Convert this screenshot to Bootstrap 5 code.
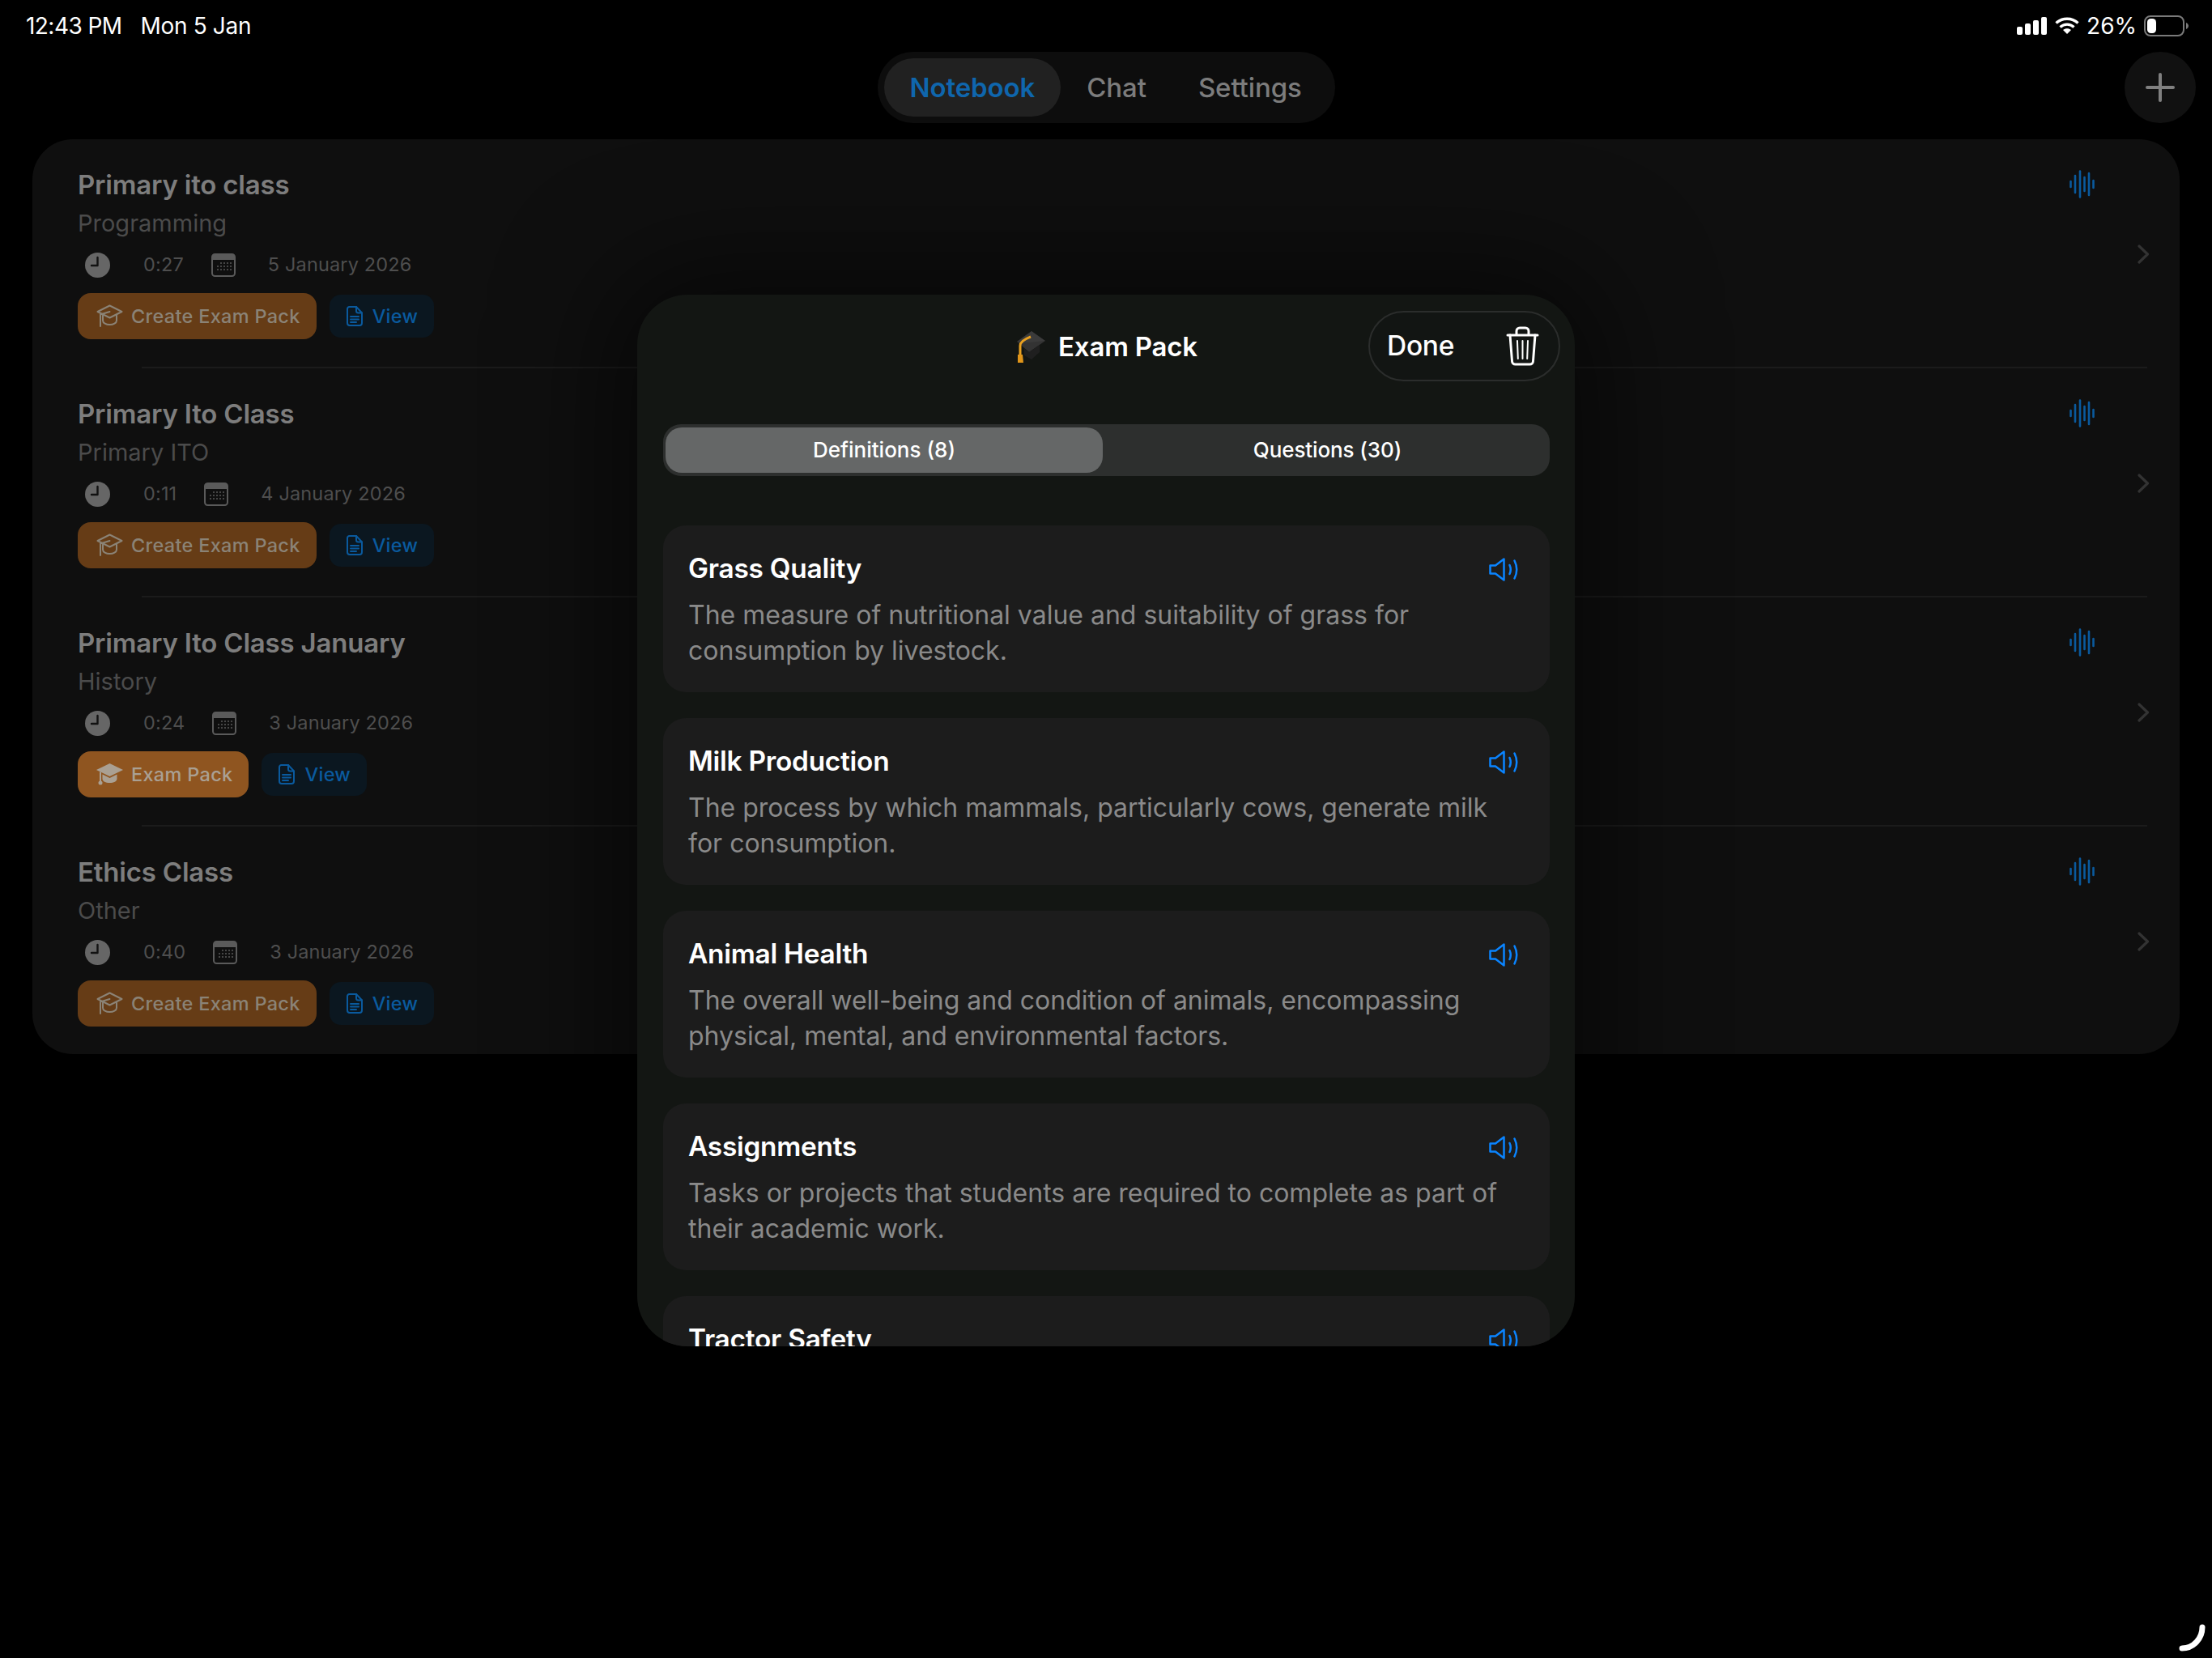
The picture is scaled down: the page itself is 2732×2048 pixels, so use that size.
<!DOCTYPE html>
<html lang="en">
<head>
<meta charset="utf-8">
<title>Notebook</title>
<link href="https://cdn.jsdelivr.net/npm/bootstrap@5.3.0/dist/css/bootstrap.min.css" rel="stylesheet">
<style>
html,body{background:#000;}
body{width:2732px;height:2048px;position:relative;overflow:hidden;font-family:Inter,"Liberation Sans",sans-serif;color:#fff;}
svg{display:block;flex:none;}
.statusbar{height:64px;padding:0 28px 0 32px;font-size:28px;line-height:64px;font-family:Inter,sans-serif;}
.statusbar .time{letter-spacing:-.55px;margin-right:23px;}
.statusbar .date{letter-spacing:-.35px;}
.status-right{gap:9px;}
.navrow{height:88px;margin-bottom:20px;position:relative;}
.tabs{width:565px;height:88px;border-radius:44px;background:#0d0d0d;padding:8px;gap:0;}
.tabs .nav-link{height:72px;border-radius:36px;font-size:33px;line-height:72px;padding:0 32px;color:#7c7c7c;font-weight:500;letter-spacing:-.1px;}
.tabs .nav-link.active{background:#212121;color:#0f66ad;font-weight:600;}
.plus{position:absolute;right:20px;top:0;width:88px;height:88px;border-radius:50%;background:#111;border:0;padding:0;}
.panel{margin:0 40px;height:1130px;background:#0f0f0f;border-radius:50px;overflow:hidden;}
.note{height:281px;padding:34px 37px 0 56px;background:transparent;border:0;border-radius:0;}
.note-title{font-size:33px;line-height:44px;font-weight:600;color:#7d7d7d;letter-spacing:-.2px;}
.note-sub{font-size:29px;line-height:40px;margin-top:6px;color:#4b4b4b;}
.meta{height:36px;margin-top:13px;padding-left:9px;font-size:23.5px;line-height:36px;color:#4e4e4e;letter-spacing:.15px;}
.meta .dur{margin:0 34px 0 41px;}
.meta .day{margin-left:40px;}
.actions{margin-top:17px;gap:16px;}
.btn-pack{height:57px;border-radius:16px;border:0;padding:0 20px 0 23px;gap:10px;background:#663c16;color:#8b8376;font-size:23.5px;font-weight:500;letter-spacing:.3px;}
.btn-pack.done-pack{background:#8f5520;color:#aaa093;}
.btn-view{height:53px;border-radius:14px;border:0;padding:0 20px 0 21px;gap:12px;background:#0b1720;color:#0a5a9e;font-size:23.5px;font-weight:500;letter-spacing:.3px;}
.wave{margin-right:53px;margin-top:4px;}
.chev{margin-top:96px;}
.sep{height:2px;margin:0 40px 0 135px;background:#1b1b1b;}
.modal-sheet{position:absolute;left:787px;top:364px;width:1158px;height:1299px;border-radius:62px;background:#131613;overflow:hidden;box-shadow:0 0 140px 30px rgba(0,0,0,.55);}
.sheet-head{display:grid;grid-template-columns:1fr auto 1fr;align-items:center;padding:20px 18px 0;}
.sheet-title{gap:14px;font-size:33px;font-weight:600;line-height:44px;letter-spacing:-.2px;}
.done-pill{justify-self:end;width:237px;height:87px;border:2px solid #2b2d2c;border-radius:44px;padding:0 24px 0 21px;background:#121513;}
.done-pill span{font-size:33.5px;font-weight:500;letter-spacing:-.3px;color:#fff;}
.seg{margin:53px 31px 0 32px;height:64px;padding:4px 3px;background:#2d2f2e;border-radius:22px;}
.seg .btn{flex:1 1 0;height:56px;border:0;border-radius:20px;padding:0 0 0 6px;font-size:26px;font-weight:500;color:#fff;line-height:56px;letter-spacing:-.1px;}
.seg .btn.active{flex:0 0 540px;padding:0;background:#656767;color:#fff;letter-spacing:0;}
.defs{margin:61px 31px 0 32px;gap:32px;}
.def{height:206px;flex:none;border:0;border-radius:28px;background:#1c1c1c;padding:31px 38px 30px 31px;}
.def h5{font-size:33.4px;line-height:44px;font-weight:600;margin:0;color:#fff;letter-spacing:-.25px;}
.def .speak{margin-top:2px;}
.def p{font-size:32px;line-height:44px;margin:14px 0 0;color:#8a8a8a;letter-spacing:0;}
.grab{position:absolute;right:8px;bottom:7px;}
</style>
</head>
<body>
<svg width="0" height="0" style="position:absolute">
<defs>
<symbol id="i-clock" viewBox="0 0 31 31"><circle cx="15.5" cy="15.5" r="15.5" fill="#666"/><path d="M15.5 6v10H8" fill="none" stroke="#121212" stroke-width="2.4" stroke-linecap="round" stroke-linejoin="round"/></symbol>
<symbol id="i-cal" viewBox="0 0 30 29"><rect x="1" y="1" width="28" height="27" rx="3.5" fill="none" stroke="#5a5a5a" stroke-width="2"/><path d="M1 8V4.5A3.5 3.5 0 0 1 4.5 1h21A3.5 3.5 0 0 1 29 4.5V8z" fill="#5a5a5a"/><g fill="#5a5a5a"><circle cx="12" cy="12" r="1"/><circle cx="16" cy="12" r="1"/><circle cx="20" cy="12" r="1"/><circle cx="24" cy="12" r="1"/><circle cx="8" cy="16" r="1"/><circle cx="12" cy="16" r="1"/><circle cx="16" cy="16" r="1"/><circle cx="20" cy="16" r="1"/><circle cx="24" cy="16" r="1"/><circle cx="8" cy="20" r="1"/><circle cx="12" cy="20" r="1"/><circle cx="16" cy="20" r="1"/><circle cx="20" cy="20" r="1"/><circle cx="24" cy="20" r="1"/></g></symbol>
<symbol id="i-cap" viewBox="0 0 33 29"><g fill="none" stroke="currentColor" stroke-width="2" stroke-linejoin="round" stroke-linecap="round"><path d="M16.5 1.5 31.5 9 16.5 16.5 1.5 9z"/><path d="M8 13.5V20c0 3 4 5 8.5 5S25 23 25 20v-6.5"/><path d="M16.5 9 5 12.5V27"/></g></symbol>
<symbol id="i-capf" viewBox="0 0 33 29"><path d="M16.5 1 33 9 16.5 17 0 9z" fill="currentColor"/><path d="M7.5 14.5 16.5 19l9-4.500V20c0 3-4 5-9 5s-9-2-9-5z" fill="currentColor"/><path d="M5 11.5V24" stroke="currentColor" stroke-width="2" fill="none"/><circle cx="5" cy="25" r="2.5" fill="currentColor"/></symbol>
<symbol id="i-doc" viewBox="0 0 20 25"><g fill="none" stroke="currentColor" stroke-width="2" stroke-linejoin="round" stroke-linecap="round"><path d="M3.5 1H12l7 7.5V21a3 3 0 0 1-3 3H4a3 3 0 0 1-3-3V3.5A2.5 2.5 0 0 1 3.5 1z"/><path d="M12 1v5a2.5 2.5 0 0 0 2.5 2.5H19"/><path d="M5 13h10M5 16.5h10M5 20h7"/></g></symbol>
<symbol id="i-wave" viewBox="0 0 31 35"><g stroke="#0a5a9e" stroke-width="2.6" stroke-linecap="round"><path d="M1.5 14v7M7 7v21M13 1.5v32M18.5 9v17M24 4v27M29.5 13v9"/></g></symbol>
<symbol id="i-chev" viewBox="0 0 15 24"><path d="M2 2l10.5 10L2 22" fill="none" stroke="#333" stroke-width="3.2" stroke-linecap="round" stroke-linejoin="round"/></symbol>
<symbol id="i-speak" viewBox="0 0 37 29"><g fill="none" stroke="#0a84ff" stroke-width="2.5" stroke-linecap="round" stroke-linejoin="round"><path d="M1.5 9.5H8L18.5 1.5v26L8 19.5H1.5z"/><path d="M25.5 9c1.6 3.5 1.6 7.5 0 11"/><path d="M31.5 3.5c3.5 7 3.5 15 0 22"/></g></symbol>
</defs>
</svg>

<header class="statusbar d-flex justify-content-between">
  <div><span class="time">12:43 PM</span><span class="date">Mon 5 Jan</span></div>
  <div class="status-right d-flex align-items-center">
    <svg width="38" height="24" viewBox="0 0 38 24"><g fill="#fff"><rect x="0" y="13" width="7" height="10" rx="2"/><rect x="10" y="9" width="7" height="14" rx="2"/><rect x="20" y="5" width="7" height="18" rx="2"/><rect x="30" y="1" width="7" height="22" rx="2"/></g></svg>
    <svg width="30" height="24" viewBox="0 0 30 24"><g fill="none" stroke="#fff" stroke-width="3.4"><path d="M1.5 8.5C9 1.5 21 1.5 28.5 8.5"/><path d="M6.5 13.5C11.5 9 18.5 9 23.5 13.5"/></g><path d="M15 22l-5-5c3-2.5 7-2.5 10 0z" fill="#fff"/></svg>
    <span class="pct">26%</span>
    <svg width="56" height="26" viewBox="0 0 56 26"><rect x="1" y="1" width="48" height="24" rx="7" fill="none" stroke="#7a7a7a" stroke-width="2"/><rect x="4" y="4" width="11" height="18" rx="4.5" fill="#fff"/><path d="M52 9c2 1 3 2.5 3 4s-1 3-3 4z" fill="#7a7a7a"/></svg>
  </div>
</header>

<div class="navrow d-flex justify-content-center">
  <ul class="nav tabs flex-nowrap">
    <li class="nav-item"><a class="nav-link active" href="#">Notebook</a></li>
    <li class="nav-item"><a class="nav-link" href="#">Chat</a></li>
    <li class="nav-item"><a class="nav-link" href="#">Settings</a></li>
  </ul>
  <button class="plus btn d-flex align-items-center justify-content-center" aria-label="Add"><svg width="36" height="36" viewBox="0 0 36 36"><path d="M18 2v32M2 18h32" stroke="#808080" stroke-width="4" stroke-linecap="round"/></svg></button>
</div>

<main class="panel list-group">
  <div class="note list-group-item d-flex">
    <div class="flex-grow-1">
      <div class="note-title">Primary ito class</div>
      <div class="note-sub">Programming</div>
      <div class="meta d-flex align-items-center"><svg width="31" height="31"><use href="#i-clock"/></svg><span class="dur">0:27</span><svg width="30" height="29"><use href="#i-cal"/></svg><span class="day">5 January 2026</span></div>
      <div class="actions d-flex align-items-center">
        <button class="btn btn-pack d-flex align-items-center"><svg width="33" height="29"><use href="#i-cap"/></svg>Create Exam Pack</button>
        <button class="btn btn-view d-flex align-items-center"><svg width="20" height="25"><use href="#i-doc"/></svg>View</button>
      </div>
    </div>
    <svg class="wave" width="31" height="35"><use href="#i-wave"/></svg>
    <svg class="chev" width="15" height="24"><use href="#i-chev"/></svg>
  </div>
  <div class="sep"></div>
  <div class="note list-group-item d-flex">
    <div class="flex-grow-1">
      <div class="note-title">Primary Ito Class</div>
      <div class="note-sub">Primary ITO</div>
      <div class="meta d-flex align-items-center"><svg width="31" height="31"><use href="#i-clock"/></svg><span class="dur">0:11</span><svg width="30" height="29"><use href="#i-cal"/></svg><span class="day">4 January 2026</span></div>
      <div class="actions d-flex align-items-center">
        <button class="btn btn-pack d-flex align-items-center"><svg width="33" height="29"><use href="#i-cap"/></svg>Create Exam Pack</button>
        <button class="btn btn-view d-flex align-items-center"><svg width="20" height="25"><use href="#i-doc"/></svg>View</button>
      </div>
    </div>
    <svg class="wave" width="31" height="35"><use href="#i-wave"/></svg>
    <svg class="chev" width="15" height="24"><use href="#i-chev"/></svg>
  </div>
  <div class="sep"></div>
  <div class="note list-group-item d-flex">
    <div class="flex-grow-1">
      <div class="note-title">Primary Ito Class January</div>
      <div class="note-sub">History</div>
      <div class="meta d-flex align-items-center"><svg width="31" height="31"><use href="#i-clock"/></svg><span class="dur">0:24</span><svg width="30" height="29"><use href="#i-cal"/></svg><span class="day">3 January 2026</span></div>
      <div class="actions d-flex align-items-center">
        <button class="btn btn-pack done-pack d-flex align-items-center"><svg width="33" height="29"><use href="#i-capf"/></svg>Exam Pack</button>
        <button class="btn btn-view d-flex align-items-center"><svg width="20" height="25"><use href="#i-doc"/></svg>View</button>
      </div>
    </div>
    <svg class="wave" width="31" height="35"><use href="#i-wave"/></svg>
    <svg class="chev" width="15" height="24"><use href="#i-chev"/></svg>
  </div>
  <div class="sep"></div>
  <div class="note list-group-item d-flex">
    <div class="flex-grow-1">
      <div class="note-title">Ethics Class</div>
      <div class="note-sub">Other</div>
      <div class="meta d-flex align-items-center"><svg width="31" height="31"><use href="#i-clock"/></svg><span class="dur">0:40</span><svg width="30" height="29"><use href="#i-cal"/></svg><span class="day">3 January 2026</span></div>
      <div class="actions d-flex align-items-center">
        <button class="btn btn-pack d-flex align-items-center"><svg width="33" height="29"><use href="#i-cap"/></svg>Create Exam Pack</button>
        <button class="btn btn-view d-flex align-items-center"><svg width="20" height="25"><use href="#i-doc"/></svg>View</button>
      </div>
    </div>
    <svg class="wave" width="31" height="35"><use href="#i-wave"/></svg>
    <svg class="chev" width="15" height="24"><use href="#i-chev"/></svg>
  </div>
</main>

<section class="modal-sheet">
  <div class="sheet-head">
    <div></div>
    <div class="sheet-title d-flex align-items-center">
      <svg width="40" height="42" viewBox="0 0 40 42"><path d="M21 2 38 14 18 28 3 15z" fill="#333"/><path d="M21 2 38 14 18 16 3 15z" fill="#444" opacity=".5"/><path d="M12 24v8l9 5 10-9v-9l-13 9z" fill="#1f1f1f"/><path d="M20 9C12 12 7 15 7 20v11" fill="none" stroke="#e8a020" stroke-width="3"/><path d="M4 31h6l1 10H4z" fill="#e0951a"/></svg>
      <span>Exam Pack</span>
    </div>
    <div class="done-pill d-flex align-items-center justify-content-between">
      <span>Done</span>
      <svg width="41" height="49" viewBox="0 0 41 49" aria-label="Delete"><g fill="none" stroke="#fff" stroke-width="3" stroke-linecap="round" stroke-linejoin="round"><path d="M2 11h37"/><path d="M13 10V6a4 4 0 0 1 4-4h7a4 4 0 0 1 4 4v4"/><path d="M5 11l2.5 32a4 4 0 0 0 4 4h18a4 4 0 0 0 4-4L36 11"/></g><g stroke="#fff" stroke-width="2" stroke-linecap="round"><path d="M14 18l.8 22M20.5 18v22M27 18l-.8 22"/></g></svg>
    </div>
  </div>

  <div class="seg d-flex" role="group">
    <button class="btn active">Definitions (8)</button>
    <button class="btn">Questions (30)</button>
  </div>

  <div class="defs d-flex flex-column">
    <article class="def card">
      <div class="d-flex justify-content-between align-items-center"><h5>Grass Quality</h5><svg class="speak" width="37" height="29"><use href="#i-speak"/></svg></div>
      <p>The measure of nutritional value and suitability of grass for consumption by livestock.</p>
    </article>
    <article class="def card">
      <div class="d-flex justify-content-between align-items-center"><h5>Milk Production</h5><svg class="speak" width="37" height="29"><use href="#i-speak"/></svg></div>
      <p>The process by which mammals, particularly cows, generate milk for consumption.</p>
    </article>
    <article class="def card">
      <div class="d-flex justify-content-between align-items-center"><h5>Animal Health</h5><svg class="speak" width="37" height="29"><use href="#i-speak"/></svg></div>
      <p>The overall well-being and condition of animals, encompassing physical, mental, and environmental factors.</p>
    </article>
    <article class="def card">
      <div class="d-flex justify-content-between align-items-center"><h5>Assignments</h5><svg class="speak" width="37" height="29"><use href="#i-speak"/></svg></div>
      <p>Tasks or projects that students are required to complete as part of their academic work.</p>
    </article>
    <article class="def card">
      <div class="d-flex justify-content-between align-items-center"><h5>Tractor Safety</h5><svg class="speak" width="37" height="29"><use href="#i-speak"/></svg></div>
    </article>
  </div>
</section>

<svg class="grab" width="34" height="36" viewBox="0 0 34 36"><path d="M30 5C30 18 20 31 5 31" fill="none" stroke="#fff" stroke-width="7" stroke-linecap="round"/></svg>

<script src="https://cdn.jsdelivr.net/npm/bootstrap@5.3.0/dist/js/bootstrap.bundle.min.js"></script>
</body>
</html>
